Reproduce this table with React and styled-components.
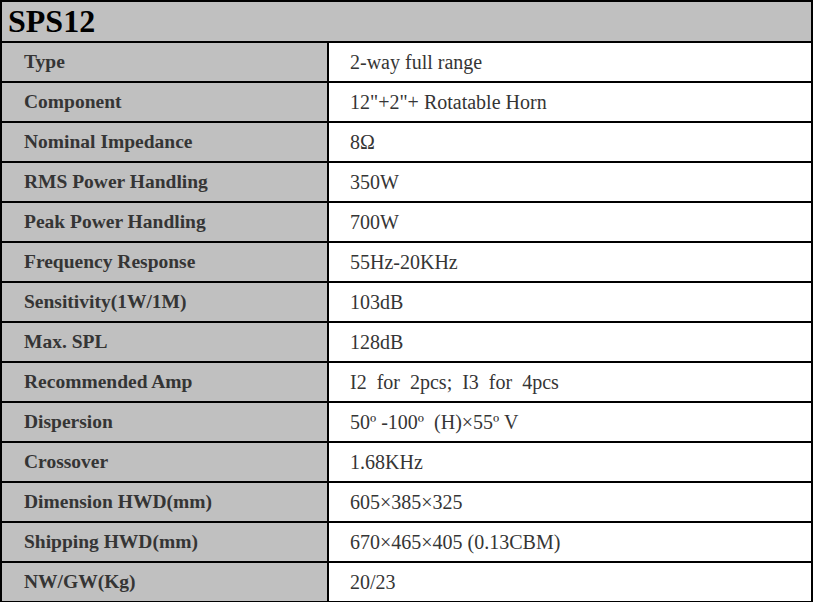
import { createGlobalStyle, styled } from 'styled-components'

const GlobalStyle = createGlobalStyle`
    html, body {
        margin: 0;
        padding: 0;
        background: #ffffff;
    }
`

const specs = [
    ['Type', '2-way full range'],
    ['Component', '12"+2"+ Rotatable Horn'],
    ['Nominal Impedance', '8Ω'],
    ['RMS Power Handling', '350W'],
    ['Peak Power Handling', '700W'],
    ['Frequency Response', '55Hz-20KHz'],
    ['Sensitivity(1W/1M)', '103dB'],
    ['Max. SPL', '128dB'],
    ['Recommended Amp', 'I2\u00a0 for\u00a0 2pcs;\u00a0 I3\u00a0 for\u00a0 4pcs'],
    ['Dispersion', '50º -100º\u00a0 (H)×55º V'],
    ['Crossover', '1.68KHz'],
    ['Dimension HWD(mm)', '605×385×325'],
    ['Shipping HWD(mm)', '670×465×405 (0.13CBM)'],
    ['NW/GW(Kg)', '20/23'],
]

const Sheet = styled.table`
    width: 813px;
    border-collapse: collapse;
    table-layout: fixed;
    font-family: "Liberation Serif", "DejaVu Serif", serif;
    color: #353535;
    border: 2px solid #000;
`

const TitleCell = styled.th`
    height: 39px;
    padding: 0 0 0 6px;
    background: #c0c0c0;
    border-bottom: 2px solid #000;
    text-align: left;
    font-size: 32px;
    font-weight: bold;
    color: #000;
`

const Row = styled.tr`
    height: 40px;
`

const LabelCell = styled.td`
    padding: 0 0 0 22px;
    background: #c0c0c0;
    border-bottom: 2px solid #000;
    border-right: 2px solid #000;
    font-size: 19.5px;
    font-weight: bold;
`

const ValueCell = styled.td`
    padding: 0 0 0 21px;
    background: #ffffff;
    border-bottom: 2px solid #000;
    font-size: 20px;
`

function App() {
    return (
        <>
            <GlobalStyle />
            <Sheet>
                <colgroup>
                    <col style={{ width: 327 }} />
                    <col />
                </colgroup>
                <thead>
                    <tr>
                        <TitleCell colSpan={2}>SPS12</TitleCell>
                    </tr>
                </thead>
                <tbody>
                    {specs.map(([label, value]) => (
                        <Row key={label}>
                            <LabelCell>{label}</LabelCell>
                            <ValueCell>{value}</ValueCell>
                        </Row>
                    ))}
                </tbody>
            </Sheet>
        </>
    )
}

export default App
